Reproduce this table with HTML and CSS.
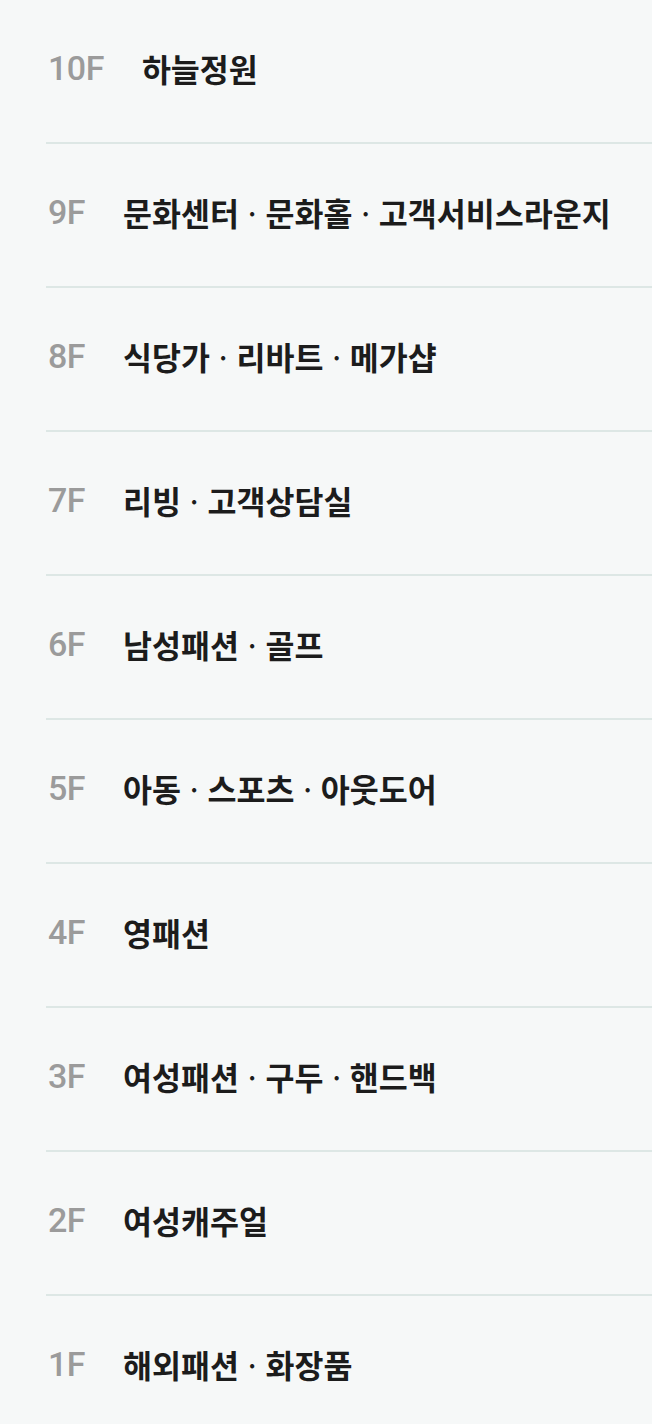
FILE: index.html
```html
<!DOCTYPE html>
<html lang="ko">
<head>
<meta charset="utf-8">
<link rel="stylesheet" href="styles.css">
</head>
<body>
<ul class="floors">
  <li class="floor"><span class="num">10F</span><span class="name">하늘정원</span></li>
  <li class="floor"><span class="num">9F</span><span class="name">문화센터<span class="dot"> · </span>문화홀<span class="dot"> · </span>고객서비스라운지</span></li>
  <li class="floor"><span class="num">8F</span><span class="name">식당가<span class="dot"> · </span>리바트<span class="dot"> · </span>메가샵</span></li>
  <li class="floor"><span class="num">7F</span><span class="name">리빙<span class="dot"> · </span>고객상담실</span></li>
  <li class="floor"><span class="num">6F</span><span class="name">남성패션<span class="dot"> · </span>골프</span></li>
  <li class="floor"><span class="num">5F</span><span class="name">아동<span class="dot"> · </span>스포츠<span class="dot"> · </span>아웃도어</span></li>
  <li class="floor"><span class="num">4F</span><span class="name">영패션</span></li>
  <li class="floor"><span class="num">3F</span><span class="name">여성패션<span class="dot"> · </span>구두<span class="dot"> · </span>핸드백</span></li>
  <li class="floor"><span class="num">2F</span><span class="name">여성캐주얼</span></li>
  <li class="floor"><span class="num">1F</span><span class="name">해외패션<span class="dot"> · </span>화장품</span></li>
</ul>
</body>
</html>
```

FILE: styles.css
```css
html, body {
  margin: 0;
  padding: 0;
  background: #f6f8f8;
}
body {
  font-family: Roboto, "Noto Sans CJK KR", sans-serif;
}
.floors {
  list-style: none;
  margin: 0 0 0 46px;
  padding: 0;
}
.floor {
  box-sizing: border-box;
  display: flex;
  align-items: center;
  height: 144px;
  padding: 0 0 6px 2px;
  border-bottom: 2px solid #dde7e5;
}
.floor:last-child {
  border-bottom: none;
  height: 142px;
}
.num {
  font-family: Roboto, sans-serif;
  font-weight: 500;
  font-size: 34px;
  line-height: 40px;
  color: #9b9b9b;
  margin-right: 38px;
  letter-spacing: -0.5px;
}
.name {
  font-family: "Noto Sans CJK KR", sans-serif;
  font-weight: 700;
  font-size: 31.5px;
  line-height: 40px;
  color: #1c1c1c;
  letter-spacing: 0;
}
.dot {
  font-weight: 400;
}
```
